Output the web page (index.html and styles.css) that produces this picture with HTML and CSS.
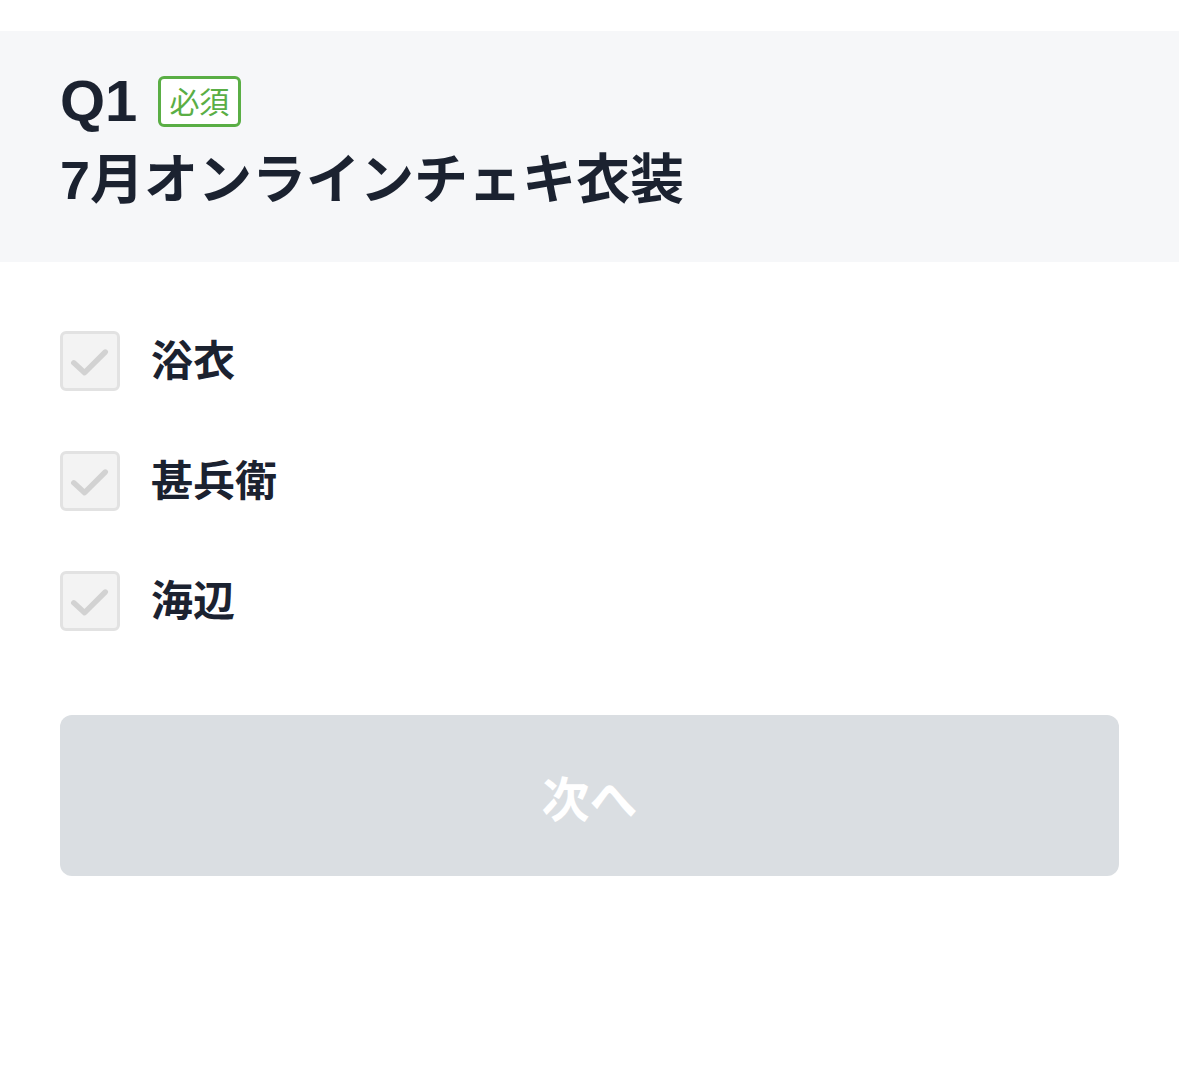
FILE: index.html
```html
<!DOCTYPE html>
<html lang="ja">
<head>
    <meta charset="UTF-8">
    <meta name="viewport" content="width=device-width, initial-scale=1.0">
    <title>アンケート Q1</title>
    <link rel="stylesheet" href="styles.css">
</head>
<body>
    <div class="survey">
        <div class="question-head">
            <div class="question-no">
                <span class="q-label">Q1</span>
                <span class="required">必須</span>
            </div>
            <h1 class="question-title">7月オンラインチェキ衣装</h1>
        </div>

        <ul class="choices">
            <li class="choice">
                <span class="checkbox">
                    <svg viewBox="0 0 60 60" width="54" height="54"><path d="M12 32 L24 43 L47 20" /></svg>
                </span>
                <span class="choice-label">浴衣</span>
            </li>
            <li class="choice">
                <span class="checkbox">
                    <svg viewBox="0 0 60 60" width="54" height="54"><path d="M12 32 L24 43 L47 20" /></svg>
                </span>
                <span class="choice-label">甚兵衛</span>
            </li>
            <li class="choice">
                <span class="checkbox">
                    <svg viewBox="0 0 60 60" width="54" height="54"><path d="M12 32 L24 43 L47 20" /></svg>
                </span>
                <span class="choice-label">海辺</span>
            </li>
        </ul>

        <div class="actions">
            <button class="next-button" disabled>次へ</button>
        </div>
    </div>
</body>
</html>
```

FILE: styles.css
```css
 /* Base */
 body {
     margin: 0;
     padding: 0;
     background-color: #ffffff;
     font-family: "Liberation Sans", "Noto Sans CJK JP", sans-serif;
     color: #1b2230;
 }

 .survey {
     padding-top: 31px;
 }

 /* Question header band */
 .question-head {
     background-color: #f6f7f9;
     padding: 40px 60px 47px;
 }

 .question-no {
     display: flex;
     align-items: center;
     height: 60px;
     gap: 21px;
 }

 .q-label {
     font-size: 58px;
     font-weight: bold;
     line-height: 60px;
 }

 .required {
     display: inline-block;
     box-sizing: border-box;
     height: 51px;
     padding: 0 9px 0 8px;
     border: 3px solid #5aae45;
     border-radius: 6px;
     color: #5aae45;
     font-family: "Noto Sans CJK JP", sans-serif;
     font-size: 30px;
     line-height: 42px;
     background-color: #ffffff;
 }

 .question-title {
     margin: 14px 0 0;
     font-size: 54px;
     font-weight: bold;
     line-height: 70px;
 }

 /* Choices */
 .choices {
     list-style: none;
     margin: 69px 0 0;
     padding: 0 60px;
     display: flex;
     flex-direction: column;
     gap: 60px;
 }

 .choice {
     display: flex;
     align-items: center;
     gap: 31px;
     height: 60px;
 }

 .checkbox {
     box-sizing: border-box;
     width: 60px;
     height: 60px;
     border: 3px solid #e2e2e2;
     border-radius: 6px;
     background-color: #f3f3f3;
     display: flex;
     align-items: center;
     justify-content: center;
 }

 .checkbox svg path {
     fill: none;
     stroke: #d2d2d2;
     stroke-width: 6;
     stroke-linecap: round;
     stroke-linejoin: round;
 }

 .choice-label {
     font-family: "Noto Sans CJK JP", sans-serif;
     font-size: 42px;
     font-weight: bold;
     line-height: 60px;
     padding-bottom: 6px;
 }

 /* Next button */
 .actions {
     padding: 84px 60px 0;
 }

 .next-button {
     display: block;
     width: 100%;
     height: 161px;
     border: none;
     border-radius: 12px;
     background-color: #dadee2;
     color: #ffffff;
     font-family: "Noto Sans CJK JP", sans-serif;
     font-size: 48px;
     font-weight: bold;
 }
```
